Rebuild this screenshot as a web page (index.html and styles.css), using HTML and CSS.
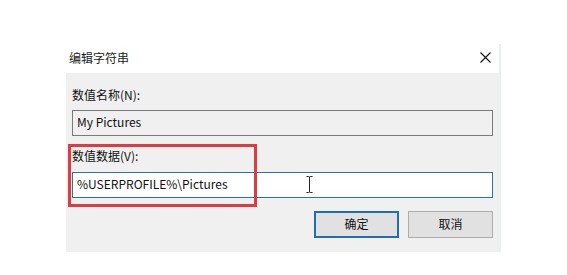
FILE: index.html
```html
<!DOCTYPE html>
<html lang="zh-CN">
<head>
<meta charset="utf-8">
<title>编辑字符串</title>
<link rel="stylesheet" href="styles.css">
</head>
<body>
<div class="dialog">
  <div class="titlebar">
    <span class="title">编辑字符串</span>
    <svg class="close" width="11" height="11" viewBox="0 0 11 11"><path d="M0.5 0.5 L10.5 10.5 M10.5 0.5 L0.5 10.5" stroke="#111" stroke-width="1.1" fill="none"/></svg>
  </div>
  <div class="content">
    <div class="label label-name">数值名称(N):</div>
    <div class="field field-readonly">My Pictures</div>
    <div class="label label-data">数值数据(V):</div>
    <div class="field field-active">%USERPROFILE%\Pictures</div>
    <div class="buttons">
      <div class="btn btn-default">确定</div>
      <div class="btn">取消</div>
    </div>
  </div>
  <div class="highlight"></div>
  <svg class="ibeam" width="7" height="17" viewBox="0 0 7 17"><path d="M0.5 0.5 H2.5 Q3.5 0.5 3.5 1.5 Q3.5 0.5 4.5 0.5 H6.5 M3.5 1.5 V15.5 M0.5 16.5 H2.5 Q3.5 16.5 3.5 15.5 Q3.5 16.5 4.5 16.5 H6.5" stroke="#222" stroke-width="1" fill="none"/></svg>
</div>
</body>
</html>
```

FILE: styles.css
```css
* { box-sizing: border-box; }
html, body {
  margin: 0;
  padding: 0;
  background: #ffffff;
}
body {
  font-family: "Noto Sans CJK SC", "Noto Sans", sans-serif;
  font-size: 12px;
  color: #111;
  width: 567px;
  height: 275px;
  overflow: hidden;
}
.dialog {
  position: relative;
  margin: 44px 0 0 66px;
  width: 435px;
  border-right: 2px solid #e9efec;
}
.titlebar {
  height: 29px;
  background: #ffffff;
  display: flex;
  align-items: center;
  justify-content: space-between;
  padding: 0 8px 2px 3px;
}
.title {
  font-size: 12px;
  line-height: 16px;
  color: #222;
}
.close { display: block; }
.content {
  background: #f0f0f0;
  padding: 14px 6px 13px 6px;
  height: 179px;
}
.label {
  line-height: 16px;
  height: 16px;
}
.label-name { margin-bottom: 7px; }
.label-data { margin-top: 12px; margin-bottom: 8px; }
.field {
  height: 26px;
  line-height: 22px;
  padding: 0 4px;
  border: 1px solid #7a7a7a;
  width: 421px;
}
.field-readonly {
  background: #f0f0f0;
}
.field-active {
  background: #ffffff;
  border-color: #2a73aa;
}
.buttons {
  display: flex;
  justify-content: flex-end;
  gap: 9px;
  margin-top: 13px;
  width: 421px;
}
.btn {
  width: 85px;
  height: 27px;
  line-height: 24px;
  text-align: center;
  background: #e1e1e1;
  border: 1px solid #adadad;
}
.btn-default {
  border: 2px solid #1f6fb0;
  line-height: 22px;
}
.highlight {
  position: absolute;
  left: 2px;
  top: 100px;
  width: 189px;
  height: 63px;
  border: 3px solid #dc3d42;
}
.ibeam {
  position: absolute;
  left: 240px;
  top: 132px;
}
```
